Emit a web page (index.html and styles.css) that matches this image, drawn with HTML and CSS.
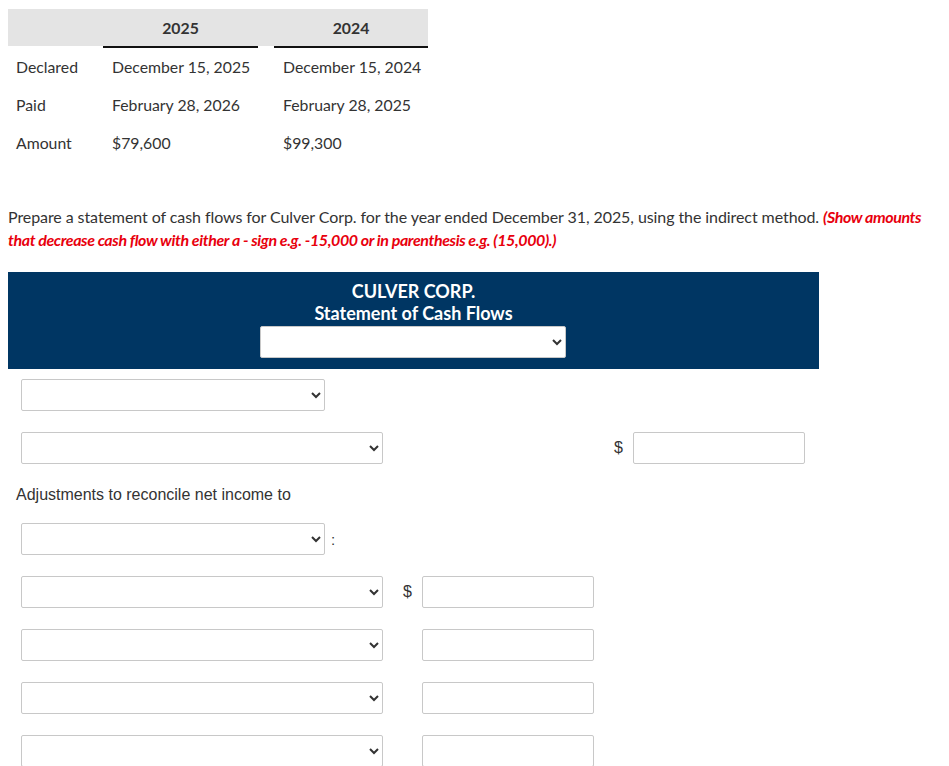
FILE: index.html
```html
<!DOCTYPE html>
<html lang="en">
<head>
  <meta charset="UTF-8" />
  <title>Culver Corp. - Statement of Cash Flows</title>
  <link rel="stylesheet" href="styles.css">
</head>
<body>

  <div class="div-table">
    <div class="cell head"></div>
    <div class="cell head year">2025</div>
    <div class="cell head spacer"></div>
    <div class="cell head year">2024</div>

    <div class="cell label">Declared</div>
    <div class="cell">December 15, 2025</div>
    <div class="cell"></div>
    <div class="cell">December 15, 2024</div>

    <div class="cell label">Paid</div>
    <div class="cell">February 28, 2026</div>
    <div class="cell"></div>
    <div class="cell">February 28, 2025</div>

    <div class="cell label">Amount</div>
    <div class="cell">$79,600</div>
    <div class="cell"></div>
    <div class="cell">$99,300</div>
  </div>

  <p class="question">
    Prepare a statement of cash flows for Culver Corp. for the year ended December 31, 2025, using the indirect method.
    <em class="note">(Show amounts that decrease cash flow with either a - sign e.g. -15,000 or in parenthesis e.g. (15,000).)</em>
  </p>

  <div class="statement-head">
    <div class="company">CULVER CORP.</div>
    <div class="company">Statement of Cash Flows</div>
    <select class="sel sel-period"><option></option></select>
  </div>

  <div class="statement-body">
    <div class="row">
      <select class="sel sel-short"><option></option></select>
    </div>

    <div class="row">
      <select class="sel sel-long"><option></option></select>
      <span class="dollar dollar-far">$</span>
      <input class="amount" type="text">
    </div>

    <div class="text-row">Adjustments to reconcile net income to</div>

    <div class="row">
      <select class="sel sel-short"><option></option></select>
      <span class="colon">:</span>
    </div>

    <div class="row">
      <select class="sel sel-long"><option></option></select>
      <span class="dollar">$</span>
      <input class="amount amount-mid" type="text">
    </div>

    <div class="row">
      <select class="sel sel-long"><option></option></select>
      <span class="dollar blank"></span>
      <input class="amount amount-mid" type="text">
    </div>

    <div class="row">
      <select class="sel sel-long"><option></option></select>
      <span class="dollar blank"></span>
      <input class="amount amount-mid" type="text">
    </div>

    <div class="row">
      <select class="sel sel-long"><option></option></select>
      <span class="dollar blank"></span>
      <input class="amount amount-mid" type="text">
    </div>
  </div>

</body>
</html>
```

FILE: styles.css
```css
* {
  box-sizing: border-box;
}

body {
  margin: 9px 8px 8px;
  font-family: Lato, "Liberation Sans", sans-serif;
  font-size: 16px;
  color: #333;
  background: #fff;
}

/* dividend table */
.div-table {
  display: grid;
  grid-template-columns: 95px 155px 16px 154px;
  width: 420px;
}

.cell {
  height: 38px;
  line-height: 34px;
  padding-top: 4px;
  padding-left: 9px;
  font-size: 15.8px;
  white-space: nowrap;
}

.cell.label {
  padding-left: 8px;
}

.head {
  height: 37px;
  line-height: 36px;
  padding-top: 1px;
  background: #e4e4e4;
}

.head.year {
  font-weight: bold;
  text-align: center;
  padding-left: 0;
  box-shadow: 0 2px 0 #111;
}

/* instructions */
.question {
  margin: 45px 0 0;
  line-height: 23px;
  color: #333;
  letter-spacing: -0.08px;
}

.note {
  color: #e8000d;
  font-weight: bold;
  letter-spacing: -0.4px;
}

/* statement header */
.statement-head {
  margin-top: 21px;
  width: 811px;
  height: 97px;
  background: #003663;
  color: #fff;
  text-align: center;
  padding-top: 8px;
}

.company {
  font-weight: bold;
  line-height: 22px;
  font-size: 18px;
}

.sel {
  height: 32px;
  border: 1px solid #c8c8c8;
  border-radius: 2px;
  background: #fff;
  font-family: "Liberation Sans", sans-serif;
  font-size: 14px;
  color: #333;
  display: block;
}

.sel-period {
  width: 306px;
  margin: 2px auto 0 252px;
}

/* statement rows */
.statement-body {
  padding: 10px 0 0 13px;
}

.row {
  display: flex;
  align-items: center;
  height: 32px;
  margin-bottom: 21px;
}

.sel-short {
  width: 304px;
}

.sel-long {
  width: 362px;
}

.colon {
  margin-left: 6px;
  font-family: "Liberation Sans", sans-serif;
  font-size: 15px;
}

.dollar {
  width: 39px;
  text-align: right;
  padding-right: 10px;
  font-family: "Liberation Sans", sans-serif;
  font-size: 16px;
  color: #333;
}

.dollar-far {
  width: 250px;
}

.amount {
  width: 172px;
  height: 32px;
  border: 1px solid #c8c8c8;
  border-radius: 2px;
  background: #fff;
}

.text-row {
  font-family: "Liberation Sans", sans-serif;
  font-size: 16px;
  color: #333;
  line-height: 20px;
  margin: 8px 0 18px -5px;
}
```
